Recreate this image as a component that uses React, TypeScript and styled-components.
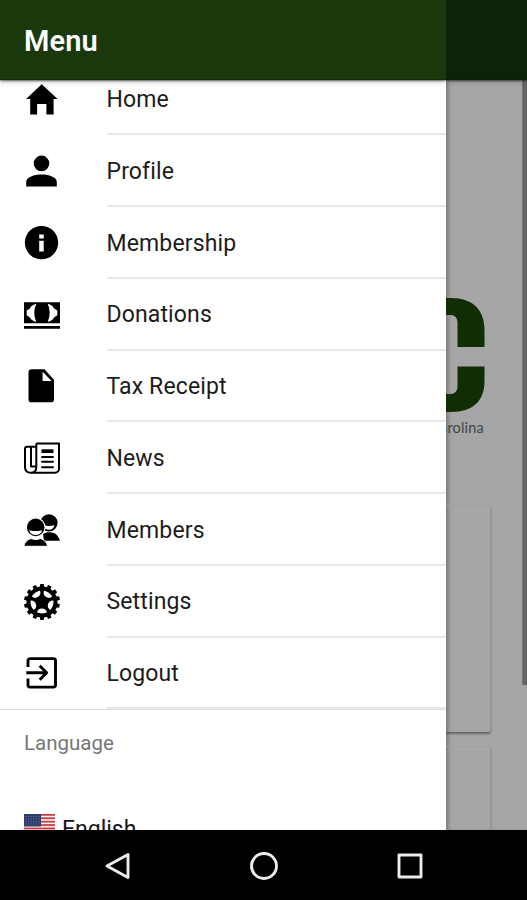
import React from "react";
import styled, { createGlobalStyle } from "styled-components";

const GlobalStyle = createGlobalStyle`
  * { box-sizing: border-box; }
  body { margin: 0; font-family: Roboto, "Liberation Sans", sans-serif; background: #000; }
`;

const Device = styled.div`
  width: 527px;
  height: 900px;
  display: grid;
  grid-template-rows: 830px 70px;
  overflow: hidden;
`;

const Screen = styled.div`
  display: grid;
  grid-template-columns: 446px 81px;
  overflow: hidden;
`;

const Drawer = styled.aside`
  display: flex;
  flex-direction: column;
  min-height: 0;
  background: #fff;
  overflow: hidden;
`;

const Bar = styled.header<{ $dimmed?: boolean }>`
  flex: none;
  height: 80px;
  padding: 2px 24px 0;
  display: flex;
  align-items: center;
  position: relative;
  background: ${(p) => (p.$dimmed ? "#0d2308" : "#19390d")};
  border-bottom: 1px solid ${(p) => (p.$dimmed ? "#0b1d07" : "#0c2d05")};
  box-shadow: 0 1px 2px rgba(0, 0, 0, 0.6), 0 3px 5px rgba(0, 0, 0, 0.12);
`;

const Title = styled.h1`
  margin: 0;
  color: #fff;
  font-size: 29px;
  font-weight: 600;
  line-height: 40px;
  letter-spacing: 0.1px;
`;

const DrawerBody = styled.div`
  flex: 1;
  min-height: 0;
  overflow: hidden;
`;

const List = styled.nav`
  margin-top: -16.5px;
  border-bottom: 1px solid #dedede;
`;

const Row = styled.a`
  height: 71.75px;
  padding-left: 24px;
  display: flex;
  align-items: center;
  color: #1c1c1c;
`;

const IconSlot = styled.span`
  width: 36px;
  height: 36px;
  margin-right: 46.5px;
  display: block;
  color: #000;
`;

const Icon = styled.svg`
  display: block;
  width: 36px;
  height: 36px;
  overflow: visible;
`;

const RowLabel = styled.span`
  flex: 1;
  height: 100%;
  padding-top: 2.5px;
  display: flex;
  align-items: center;
  font-size: 23px;
  letter-spacing: 0.13px;
  border-bottom: 2px solid #e9e9e9;
`;

const SectionLabel = styled.div`
  padding: 20px 24px 0;
  color: #777;
  font-size: 20.5px;
  line-height: 26px;
`;

const Language = styled.div`
  display: flex;
  gap: 7px;
  padding: 58px 24px 0;
  color: #161616;
  font-size: 23px;
  line-height: 31px;
`;

const Flag = styled.svg`
  width: 31px;
  height: 22px;
`;

const Page = styled.main`
  display: flex;
  flex-direction: column;
  min-width: 0;
  background: #a6a6a6;
  overflow: hidden;
`;

const PageBody = styled.div`
  flex: 1;
  min-height: 0;
  display: grid;
  grid-template-columns: 76px 5px;
  box-shadow: inset 4px 0 4px -2px rgba(0, 0, 0, 0.3);
`;

const Content = styled.div`
  padding-top: 217px;
  display: flex;
  flex-direction: column;
  overflow: hidden;
`;

const Logo = styled.svg`
  flex: none;
  width: 40px;
  height: 115px;
`;

const Tagline = styled.div`
  flex: none;
  width: 38px;
  height: 20px;
  margin: 6px 0 67px;
  display: flex;
  justify-content: flex-end;
  overflow: hidden;
  color: #414541;
  font-family: Lato, sans-serif;
  font-size: 14.5px;
  line-height: 20px;
  letter-spacing: 0.2px;
  white-space: nowrap;
`;

const Card = styled.section`
  flex: none;
  width: 45px;
  height: 227px;
  margin-bottom: 14px;
  border-radius: 0 3px 3px 0;
  border-top: 1px solid #a0a0a0;
  border-right: 1px solid #999;
  box-shadow: 0 2px 2px rgba(0, 0, 0, 0.38);
`;

const ScrollThumb = styled.div`
  width: 5px;
  height: 605px;
  background: #656565;
  border-left: 1px solid #777;
`;

const NavBar = styled.footer`
  display: flex;
  align-items: center;
  justify-content: space-between;
  padding: 1px 102px 0 103px;
  background: #000;
`;

const NavIcon = styled.svg`
  width: 30px;
  height: 30px;
  fill: none;
  stroke: #ececec;
  stroke-width: 2.9;
  stroke-linejoin: round;
`;

const Home = () => (
  <path d="M17.7 3.300 2 18h4.200v15.600h6.900V23h9.300v10.600h7.200V18h4Z" />
);

const Person = () => (
  <>
    <circle cx="17.5" cy="10.4" r="7.8" />
    <path d="M2.2 33.4v-4.2c0-5 8-7.6 15.3-7.6s15.3 2.6 15.3 7.6v4.2Z" />
  </>
);

const Info = () => (
  <>
    <circle cx="17.5" cy="17.6" r="16.7" />
    <path fill="#fff" d="M15.2 9.600h4.500v4h-4.500Zm0 6.200h4.500v10.600h-4.500Z" />
  </>
);

const Cash = () => (
  <>
    <path d="M0 5.200h36v21H0ZM0 29h36v2.700H0Z" />
    <path
      fill="#fff"
      d="M12.300 6.800C8 8 7 9.400 6 11.500L2.700 13.500v4.800L6 20.500c1 2 2.300 3.500 6.300 4.400-2.700-6-2.700-12.100 0-18.100ZM23.700 6.800c4.300 1.200 5.300 2.600 6.300 4.700l3.300 2v4.800L30 20.500c-1 2-2.300 3.500-6.300 4.400 2.700-6 2.700-12.100 0-18.100Z"
    />
  </>
);

const Document = () => (
  <path
    fillRule="evenodd"
    d="M7.500 1.200h13L30 11.700v19.700a2.800 2.800 0 0 1-2.800 2.800H7.300a2.800 2.800 0 0 1-2.800-2.800V4.200a3 3 0 0 1 3-3ZM18.600 3.700v9.300h9Z"
  />
);

const News = () => (
  <>
    <path
      fill="none"
      stroke="currentColor"
      strokeWidth="2"
      strokeLinejoin="round"
      d="M12.300 3.400h22.700v25.300a4 4 0 0 1-4 4H6.200A5.200 5.200 0 0 1 1 27.500V8.700a2 2 0 0 1 2-2h9.300M12.300 3.400v23.300c0 4-2.300 6-5.300 6M7 7v19.500h5"
    />
    <path d="M17.500 9.300h12v3.700h-12Z" />
    <path fill="none" stroke="currentColor" strokeWidth="1.900" strokeLinecap="round" d="M18 17h11M18 21.800h11M18 27.200h11" />
  </>
);

const Members = () => (
  <>
    <circle cx="25" cy="10.800" r="8.600" />
    <path fill="#fff" d="M19 13.200c4 1 8 .8 11.500 0-.8 3-2.800 4.600-5.500 4.600s-5.200-1.600-6-4.600Z" />
    <path d="M19 22c3-2.200 11-2.500 14 1.200 1.300 1.600 2.500 3.600 3 5.600H20Z" />
    <circle cx="11.700" cy="15.400" r="9.900" fill="#fff" />
    <circle cx="11.700" cy="15.400" r="8.800" />
    <path fill="#fff" d="M5.200 18.200c4.300 1.200 8.700 1.200 13 0-.8 3.300-3.200 4.700-6.500 4.700s-5.700-1.400-6.500-4.700Z" />
    <path stroke="#fff" strokeWidth="1" d="M-.300 34.300C.7 30.500 3 27.400 7.200 26.500c2.700 1.300 6.300 1.300 9 0 4.200.9 6.500 4 7.500 7.800Z" />
  </>
);

const teeth = Array.from({ length: 14 }, (_, i) => (i * 360) / 14);
const spokes = Array.from({ length: 5 }, (_, i) => i * 72);

const Gear = () => (
  <>
    {teeth.map((a) => (
      <path key={a} d="M15.700 5 16.200 0h3.600l.5 5Z" transform={`rotate(${a} 18 18)`} />
    ))}
    <circle cx="18" cy="18" r="15.500" />
    {spokes.map((a) => (
      <path
        key={a}
        fill="#fff"
        d="M13 28.300c2.700 1.500 7.300 1.500 10 0-.5-2.500-2.400-3.900-5-3.900s-4.500 1.400-5 3.900Z"
        transform={`rotate(${a} 18 18)`}
      />
    ))}
  </>
);

const Exit = () => (
  <path
    fill="none"
    stroke="currentColor"
    strokeWidth="2.900"
    strokeLinejoin="round"
    d="M4 12V5.600a2 2 0 0 1 2-2h23.500a2 2 0 0 1 2 2v24.500a2 2 0 0 1-2 2H6a2 2 0 0 1-2-2V23.600M2.300 17.700h20.500M15.700 10.700l7 7-7 7"
  />
);

const items = [
  { label: "Home", Glyph: Home },
  { label: "Profile", Glyph: Person },
  { label: "Membership", Glyph: Info },
  { label: "Donations", Glyph: Cash },
  { label: "Tax Receipt", Glyph: Document },
  { label: "News", Glyph: News },
  { label: "Members", Glyph: Members },
  { label: "Settings", Glyph: Gear },
  { label: "Logout", Glyph: Exit },
];

const stripes = [0, 1, 2, 3, 4, 5, 6];

export default function App() {
  return (
    <>
      <GlobalStyle />
      <Device>
        <Screen>
          <Drawer>
            <Bar>
              <Title>Menu</Title>
            </Bar>
            <DrawerBody>
              <List>
                {items.map(({ label, Glyph }) => (
                  <Row key={label}>
                    <IconSlot>
                      <Icon viewBox="0 0 36 36" fill="currentColor">
                        <Glyph />
                      </Icon>
                    </IconSlot>
                    <RowLabel>{label}</RowLabel>
                  </Row>
                ))}
              </List>
              <SectionLabel>Language</SectionLabel>
              <Language>
                <Flag viewBox="0 0 31 22">
                  <rect width="31" height="22" fill="#f4eeee" />
                  {stripes.map((s) => (
                    <rect key={s} y={s * 3.4} width="31" height="1.700" fill="#c8373e" />
                  ))}
                  <rect width="17" height="12.500" fill="#2f3d6c" />
                  <path
                    d="M1.500 2.500h15M1.500 5h15M1.500 7.500h15M1.500 10h15"
                    stroke="#7580a3"
                    strokeWidth="0.800"
                    strokeDasharray="1 1.600"
                  />
                </Flag>
                English
              </Language>
            </DrawerBody>
          </Drawer>
          <Page>
            <Bar $dimmed />
            <PageBody>
              <Content>
                <Logo viewBox="0 0 40 115" fill="#102d06">
                  <path d="M0 1h5C27 1 38.500 13 38.500 33v17h-27V26c0-5-2-7.500-6.500-8H0Z" />
                  <path d="M0 115h5c22 0 33.500-11 33.500-31V69.500h-27V89c0 5-2 7.500-6.500 8H0Z" />
                </Logo>
                <Tagline>North Carolina</Tagline>
                <Card />
                <Card />
              </Content>
              <ScrollThumb />
            </PageBody>
          </Page>
        </Screen>
        <NavBar>
          <NavIcon viewBox="0 0 30 30">
            <path d="M25 3.500v23L4 15Z" />
          </NavIcon>
          <NavIcon viewBox="0 0 30 30">
            <circle cx="15" cy="15" r="12.500" />
          </NavIcon>
          <NavIcon viewBox="0 0 30 30">
            <path d="M4 4h22v22H4Z" />
          </NavIcon>
        </NavBar>
      </Device>
    </>
  );
}
